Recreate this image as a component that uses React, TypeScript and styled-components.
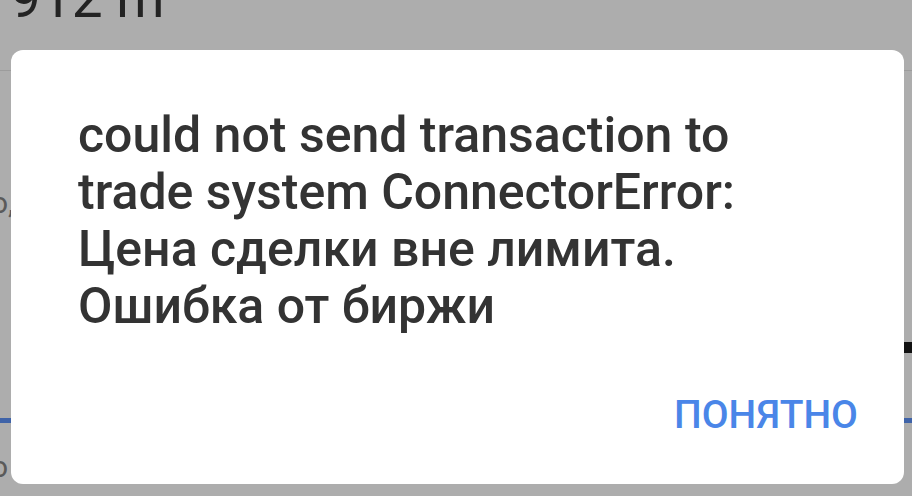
import styled, { createGlobalStyle } from "styled-components";

const GlobalStyle = createGlobalStyle`
  html, body {
    margin: 0;
    padding: 0;
    background: #adadad;
    overflow: hidden;
  }
  body {
    font-family: Roboto, "Noto Sans", Arial, sans-serif;
  }
`;

export default function App() {
  return (
    <Screen>
      <GlobalStyle />
      <Behind>
        <Distance>912 m</Distance>
        <Divider />
        <SideText $top={117}>о,</SideText>
        <RightBar />
        <AccentLine />
        <SideText $top={29}>о</SideText>
      </Behind>
      <Dialog>
        <Message>
          could not send transaction to trade system ConnectorError: Цена сделки вне лимита. Ошибка от биржи
        </Message>
        <Actions>
          <OkButton>ПОНЯТНО</OkButton>
        </Actions>
      </Dialog>
    </Screen>
  );
}

const Screen = styled.div`
  position: relative;
  width: 912px;
  height: 496px;
  overflow: hidden;
  background: #adadad;
`;

const Behind = styled.div`
  display: flex;
  flex-direction: column;
  height: 100%;
`;

const Distance = styled.div`
  font-size: 55px;
  line-height: 55px;
  color: #232323;
  margin: -29px 0 0 10px;
`;

const Divider = styled.div`
  height: 1px;
  background: #9c9c9c;
  margin-top: 44px;
`;

const SideText = styled.div<{ $top: number }>`
  font-size: 30px;
  line-height: 30px;
  color: #5a5a5a;
  margin: ${(p) => p.$top}px 0 0 -9px;
`;

const RightBar = styled.div`
  align-self: flex-end;
  width: 8px;
  height: 11px;
  margin-top: 124px;
  background: #111;
`;

const AccentLine = styled.div`
  height: 5px;
  background: #3f63a8;
  margin-top: 65px;
`;

const Dialog = styled.div`
  position: absolute;
  left: 11px;
  top: 50px;
  width: 893px;
  height: 434px;
  box-sizing: border-box;
  background: #ffffff;
  border-radius: 12px;
  display: flex;
  flex-direction: column;
  padding: 57px 100px 0 67px;
`;

const Message = styled.div`
  font-size: 50px;
  line-height: 57px;
  font-weight: 500;
  color: #333333;
  flex: 1;
`;

const Actions = styled.div`
  display: flex;
  justify-content: flex-end;
  margin-right: -54px;
  padding-bottom: 50px;
`;

const OkButton = styled.button`
  border: none;
  background: none;
  padding: 0;
  font-family: Roboto, "Noto Sans", Arial, sans-serif;
  font-size: 39px;
  line-height: 38px;
  font-weight: 500;
  color: #4a86e8;
`;
